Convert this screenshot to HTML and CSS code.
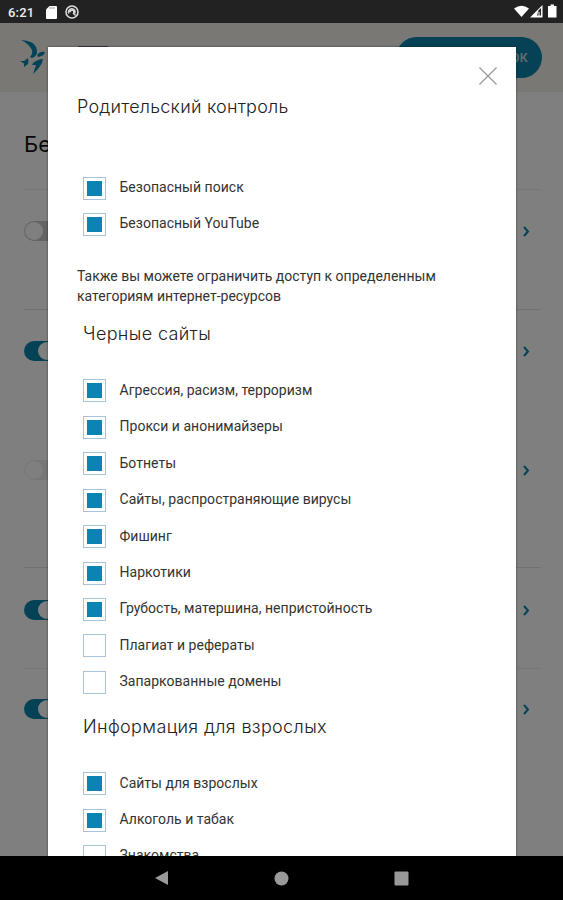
FILE: index.html
```html
<!DOCTYPE html>
<html lang="ru">
<head>
<meta charset="utf-8">
<title>Родительский контроль</title>
<link rel="stylesheet" href="styles.css">
</head>
<body>
<div class="device">
  <div class="status">
    <span class="time">6:21</span>
    <svg class="card-icon" width="11" height="13" viewBox="0 0 11 13"><path d="M3.5 0H10a1 1 0 0 1 1 1v11a1 1 0 0 1-1 1H1a1 1 0 0 1-1-1V3.5z" fill="#fff"/><path d="M4 1v2M6 1v2M8 1v2" stroke="#888" stroke-width=".8"/></svg>
    <svg class="sync-icon" width="14" height="14" viewBox="0 0 14 14" fill="none" stroke="#ddd"><circle cx="7" cy="7" r="6" stroke-width="1.6"/><path d="M3.800 8.500A3.300 3.300 0 1 1 9.800 8.400M5 7.300a2 2 0 1 1 3.500 1.200M8 8l2.600 2.500" stroke-width="1.5"/></svg>
    <svg class="signals" width="44" height="16" viewBox="0 0 44 16" fill="#fff"><path d="M0 4.500Q7.500 -1 15 4.500L7.500 13z"/><path d="M28.500 1v12.500H16z"/><path d="M24.500 6.500l2.500 -2.500v7.500h-4z" fill="#222"/><path d="M25 8v4" stroke="#fff"/><path d="M36.500 .5h3.500v1.500h2.500v11.500h-8.500V2h2.500z"/></svg>
  </div>
  <div class="screen">
    <div class="page">
      <header class="top">
        <svg class="logo" width="28" height="38" viewBox="0 0 28 38" fill="#0a85ad"><path d="M1 1Q7 1 12 3.500Q17 7 17 13Q17 17 12 19L10 18Q13 15 12 11Q8 4 1 1z"/><path d="M17 17Q19 12 25 13L23.500 16L19 18zM0 22L4 22L8 19Q9 22 8 25L4 28L4 24.500zM13 24Q18 20 23 20Q22 27 13 35L16 26L12 26z"/></svg>
        <span class="menu"></span>
        <span class="call">ЗВОНОК</span>
      </header>
      <h1>Безопасность</h1>
      <div class="services">
        <div class="service s1"><i class="switch off"></i><svg width="7" height="11" viewBox="0 0 7 11"><path d="M1 1l4 4.500L1 10"/></svg></div>
        <div class="service s2"><i class="switch on"></i><svg width="7" height="11" viewBox="0 0 7 11"><path d="M1 1l4 4.500L1 10"/></svg></div>
        <div class="service s3"><i class="switch faded"></i><svg width="7" height="11" viewBox="0 0 7 11"><path d="M1 1l4 4.500L1 10"/></svg></div>
        <div class="service s4"><i class="switch on"></i><svg width="7" height="11" viewBox="0 0 7 11"><path d="M1 1l4 4.500L1 10"/></svg></div>
        <div class="service s5"><i class="switch on"></i><svg width="7" height="11" viewBox="0 0 7 11"><path d="M1 1l4 4.500L1 10"/></svg></div>
      </div>
    </div>
    <div class="shade"></div>
    <section class="modal">
      <svg class="close" width="18" height="18" viewBox="0 0 18 18"><path d="M.5 .5l17 17M17.500 .5l-17 17" stroke="#999" stroke-width="1.300"/></svg>
      <h2>Родительский контроль</h2>
      <ul class="list first">
        <li><i class="box checked"></i><span>Безопасный поиск</span></li>
        <li><i class="box checked"></i><span>Безопасный YouTube</span></li>
      </ul>
      <p>Также вы можете ограничить доступ к определенным<br>категориям интернет-ресурсов</p>
      <h3>Черные сайты</h3>
      <ul class="list">
        <li><i class="box checked"></i><span>Агрессия, расизм, терроризм</span></li>
        <li><i class="box checked"></i><span>Прокси и анонимайзеры</span></li>
        <li><i class="box checked"></i><span>Ботнеты</span></li>
        <li><i class="box checked"></i><span>Сайты, распространяющие вирусы</span></li>
        <li><i class="box checked"></i><span>Фишинг</span></li>
        <li><i class="box checked"></i><span>Наркотики</span></li>
        <li><i class="box checked"></i><span>Грубость, матершина, непристойность</span></li>
        <li><i class="box"></i><span>Плагиат и рефераты</span></li>
        <li><i class="box"></i><span>Запаркованные домены</span></li>
      </ul>
      <h3 class="adult">Информация для взрослых</h3>
      <ul class="list">
        <li><i class="box checked"></i><span>Сайты для взрослых</span></li>
        <li><i class="box checked"></i><span>Алкоголь и табак</span></li>
        <li><i class="box"></i><span>Знакомства</span></li>
      </ul>
    </section>
  </div>
  <nav class="nav">
    <svg width="15" height="16" viewBox="0 0 15 16"><path d="M14 1v14L1 8z"/></svg>
    <svg width="15" height="15" viewBox="0 0 15 15"><circle cx="7.500" cy="7.500" r="7"/></svg>
    <svg width="15" height="15" viewBox="0 0 15 15"><rect x=".5" y=".5" width="14" height="14" rx="1"/></svg>
  </nav>
</div>
</body>
</html>
```

FILE: styles.css
```css
* { box-sizing: border-box; }
body { margin: 0; font-family: Roboto, "Liberation Sans", sans-serif; }
.device { width: 563px; height: 900px; display: flex; flex-direction: column; overflow: hidden; background: #000; }
.status { height: 23px; flex: none; background: #222; color: #eee; display: flex; align-items: center; padding: 1px 5px 0 8px; }
.time { font-size: 13px; font-weight: 500; width: 38px; letter-spacing: 0.2px; }
.sync-icon { margin-left: 8px; }
.signals { margin-left: auto; }
.screen { height: 833px; flex: none; position: relative; overflow: hidden; background: #fff; }
.top { height: 69px; background: #f4f0eb; display: flex; align-items: flex-start; padding: 14px 21px 0 20px; }
.logo { margin-top: 2px; }
.menu { width: 30px; height: 4px; margin: 9px 0 0 30px; background: #777; }
.call { margin-left: auto; width: 146px; height: 41px; border-radius: 21px; background: #0a85ad; color: #ddd; font-size: 12px; font-weight: 500; line-height: 43px; letter-spacing: 0.5px; text-align: right; padding-right: 14px; white-space: nowrap; }
h1 { margin: 38px 24px 0; font: 400 22px/28px Inter, sans-serif; color: #111; }
.services { margin: 31px 22px 0 24px; }
.service { display: flex; justify-content: space-between; align-items: flex-start; border-top: 1px solid #efefef; padding: 31px 11px 0 0; }
.service svg { margin-top: 5px; fill: none; stroke: #0a85ad; stroke-width: 2; }
.s1 { height: 120px; }
.s2 { height: 119px; border-top-color: #e2e2e2; }
.s3 { height: 139px; border-top-color: transparent; }
.s4 { height: 101px; padding-top: 32px; border-top-color: #e2e2e2; }
.s5 { height: 150px; padding-top: 30px; }
.switch { width: 42px; height: 20px; border-radius: 10px; padding: 1px; }
.switch::after { content: ""; display: block; width: 18px; height: 18px; border-radius: 50%; background: #fff; }
.off { background: #c8c8c8; }
.on { background: #0a85ad; }
.on::after { margin-left: 13px; }
.faded { background: #eee; }
.shade { position: absolute; inset: 0; background: rgba(0, 0, 0, 0.5); }
.modal { position: absolute; left: 48px; top: 24px; width: 468px; height: 1100px; padding: 48px 29px 0; background: #fff; color: #333; box-shadow: 0 0 2px rgba(0, 0, 0, 0.5); }
.close { position: absolute; right: 19px; top: 20px; }
h2, h3 { font-family: Inter, sans-serif; font-weight: 300; line-height: 24px; color: #222; }
h2 { margin: 0; font-size: 18px; letter-spacing: 0.22px; }
h3 { margin: 15px 0 0 6px; font-size: 18px; letter-spacing: 0.36px; }
.adult { margin-top: 8px; }
.list { list-style: none; margin: 33px 0 0 6px; padding: 0; }
.list.first { margin-top: 57px; }
.list li { display: flex; align-items: flex-start; height: 36.430px; font-size: 14px; line-height: 22px; }
.list span { margin-left: 13.500px; letter-spacing: 0.02px; }
.box { width: 23px; height: 23px; margin-top: 0.6px; border: 1px solid #a9c4d8; padding: 3px; flex: none; }
.checked::after { content: ""; display: block; width: 15px; height: 15px; background: #0b84b1; }
p { margin: 17px 0 0; font-size: 14px; line-height: 20.500px; }
.nav { flex: 1; background: #000; display: flex; align-items: center; justify-content: center; gap: 105px; fill: #999; }
```
